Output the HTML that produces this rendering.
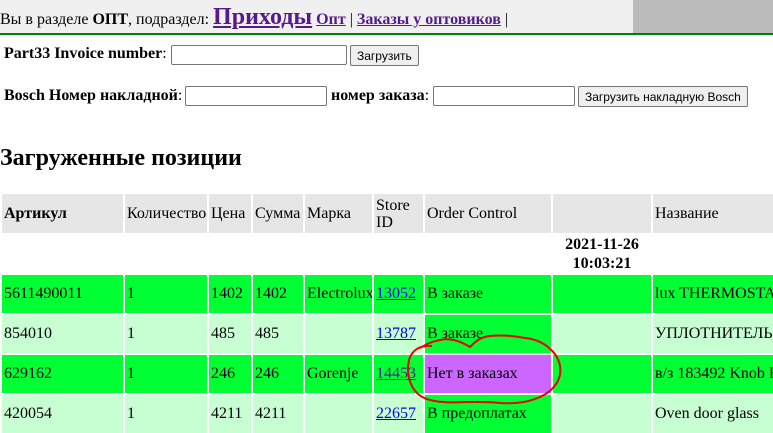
<!DOCTYPE html><html><head><meta charset="utf-8"><style>
body{margin:0;width:773px;height:427px;overflow:hidden;font-family:"Liberation Serif",serif;font-size:16px;background:#fff;position:relative}
.a{position:absolute;white-space:nowrap}
.c{position:absolute;box-sizing:border-box;padding:0 2px;display:flex;align-items:center;white-space:nowrap;overflow:hidden}
.h{background:#e6e6e6}
.g{background:#00ff33}.l{background:#c8ffd2}.v{background:#cc66ff}
a{color:#0000ee}
input.t{position:absolute;height:20px;border:1px solid #767676;border-radius:2px;box-sizing:border-box}
button{position:absolute;height:21px;font-family:"Liberation Sans",sans-serif;font-size:12px;border:1px solid #767676;border-radius:2px;background:#efefef;padding:0 6px}
</style></head><body>
<div class="a" style="left:0;top:0;width:773px;height:33px;background:#f0f0f0"></div>
<div class="a" style="left:633px;top:0;width:140px;height:33px;background:#bbb"></div>
<div class="a" style="left:0;top:33px;width:773px;height:2px;background:#008000"></div>
<div class="a" style="left:0;top:4px">Вы в разделе <b>ОПТ</b>, подраздел: <a href="#" style="color:#551a8b;font-size:24px;font-weight:bold">Приходы</a> <a href="#" style="color:#551a8b;font-weight:bold">Опт</a> | <a href="#" style="color:#551a8b;font-weight:bold">Заказы у оптовиков</a> |</div>
<div class="a" style="left:4px;top:45px"><b>Part33 Invoice number</b>:</div>
<input class="t" style="left:171px;top:45px;width:176px">
<button style="left:350px;top:45px">Загрузить</button>
<div class="a" style="left:4px;top:87px"><b>Bosch Номер накладной</b>:</div>
<input class="t" style="left:185px;top:86px;width:142px">
<div class="a" style="left:331px;top:87px"><b>номер заказа</b>:</div>
<input class="t" style="left:433px;top:86px;width:142px">
<button style="left:578px;top:86px">Загрузить накладную Bosch</button>
<div class="a" style="left:0;top:145px;font-size:24px;font-weight:bold">Загруженные позиции</div>

<div class="c h" style="left:2px;top:194px;width:121px;height:39px"><b>Артикул</b></div>
<div class="c h" style="left:125px;top:194px;width:82px;height:39px">Количество</div>
<div class="c h" style="left:209px;top:194px;width:42px;height:39px">Цена</div>
<div class="c h" style="left:253px;top:194px;width:50px;height:39px">Сумма</div>
<div class="c h" style="left:305px;top:194px;width:67px;height:39px">Марка</div>
<div class="c h" style="left:374px;top:194px;width:49px;height:39px;white-space:normal;line-height:17px">Store ID</div>
<div class="c h" style="left:425px;top:194px;width:126px;height:39px">Order Control</div>
<div class="c h" style="left:553px;top:194px;width:98px;height:39px"></div>
<div class="c h" style="left:653px;top:194px;width:120px;height:39px">Название</div>
<div class="a" style="left:553px;top:235px;width:98px;text-align:center;font-weight:bold;line-height:19px">2021-11-26<br>10:03:21</div>

<div class="c g" style="left:2px;top:275px;width:121px;height:38px">5611490011</div>
<div class="c g" style="left:125px;top:275px;width:82px;height:38px">1</div>
<div class="c g" style="left:209px;top:275px;width:42px;height:38px">1402</div>
<div class="c g" style="left:253px;top:275px;width:50px;height:38px">1402</div>
<div class="c g" style="left:305px;top:275px;width:67px;height:38px">Electrolux</div>
<div class="c g" style="left:374px;top:275px;width:49px;height:38px"><a href="#">13052</a></div>
<div class="c g" style="left:425px;top:275px;width:126px;height:38px">В заказе</div>
<div class="c g" style="left:553px;top:275px;width:98px;height:38px"></div>
<div class="c g" style="left:653px;top:275px;width:120px;height:38px">lux THERMOSTAT</div>

<div class="c l" style="left:2px;top:315px;width:121px;height:38px">854010</div>
<div class="c l" style="left:125px;top:315px;width:82px;height:38px">1</div>
<div class="c l" style="left:209px;top:315px;width:42px;height:38px">485</div>
<div class="c l" style="left:253px;top:315px;width:50px;height:38px">485</div>
<div class="c l" style="left:305px;top:315px;width:67px;height:38px"></div>
<div class="c l" style="left:374px;top:315px;width:49px;height:38px"><a href="#">13787</a></div>
<div class="c g" style="left:425px;top:315px;width:126px;height:38px">В заказе</div>
<div class="c l" style="left:553px;top:315px;width:98px;height:38px"></div>
<div class="c l" style="left:653px;top:315px;width:120px;height:38px">УПЛОТНИТЕЛЬ</div>

<div class="c g" style="left:2px;top:355px;width:121px;height:38px">629162</div>
<div class="c g" style="left:125px;top:355px;width:82px;height:38px">1</div>
<div class="c g" style="left:209px;top:355px;width:42px;height:38px">246</div>
<div class="c g" style="left:253px;top:355px;width:50px;height:38px">246</div>
<div class="c g" style="left:305px;top:355px;width:67px;height:38px">Gorenje</div>
<div class="c g" style="left:374px;top:355px;width:49px;height:38px"><a href="#" style="color:#551a8b">14453</a></div>
<div class="c v" style="left:425px;top:355px;width:126px;height:38px">Нет в заказах</div>
<div class="c g" style="left:553px;top:355px;width:98px;height:38px"></div>
<div class="c g" style="left:653px;top:355px;width:120px;height:38px">в/з 183492 Knob E</div>

<div class="c l" style="left:2px;top:395px;width:121px;height:38px">420054</div>
<div class="c l" style="left:125px;top:395px;width:82px;height:38px">1</div>
<div class="c l" style="left:209px;top:395px;width:42px;height:38px">4211</div>
<div class="c l" style="left:253px;top:395px;width:50px;height:38px">4211</div>
<div class="c l" style="left:305px;top:395px;width:67px;height:38px"></div>
<div class="c l" style="left:374px;top:395px;width:49px;height:38px"><a href="#">22657</a></div>
<div class="c g" style="left:425px;top:395px;width:126px;height:38px">В предоплатах</div>
<div class="c l" style="left:553px;top:395px;width:98px;height:38px"></div>
<div class="c l" style="left:653px;top:395px;width:120px;height:38px">Oven door glass</div>

<svg class="a" style="left:0;top:0" width="773" height="427"><path d="M432,346 C420,345 412,350 409,360 C406,375 410,395 430,400 C450,405 470,400 500,403 C530,405 555,395 560,375 C563,355 545,340 525,338 C510,335 500,335 490,336 C480,337 475,342 470,347 C462,342 450,337 440,340 C430,342 425,345 420,348" fill="none" stroke="#ee0000" stroke-width="2"/></svg>
</body></html>
